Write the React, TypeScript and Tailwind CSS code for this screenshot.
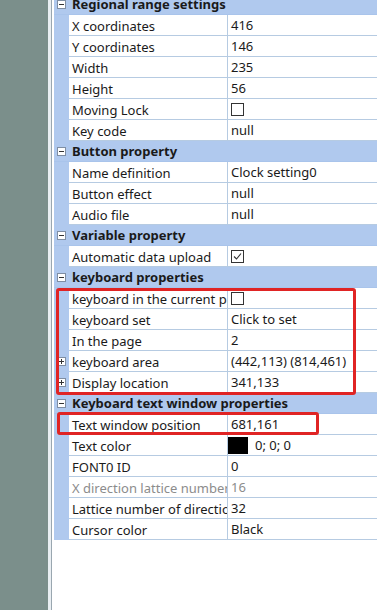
import type { ReactNode } from 'react';

type Row = { name: string; value?: ReactNode; plus?: boolean; dim?: boolean };
type Group = { title: string; rows: Row[] };

const Box = ({ checked }: { checked?: boolean }) => (
  <span className="inline-flex h-[13px] w-[13px] items-center justify-center border border-[#333] bg-white">
    {checked && (
      <svg width="11" height="11" viewBox="0 0 11 11">
        <path d="M2 5.5 L4.5 8 L9 2.5" fill="none" stroke="#333" strokeWidth="1.1" />
      </svg>
    )}
  </span>
);

const groups: Group[] = [
  {
    title: 'Regional range settings',
    rows: [
      { name: 'X coordinates', value: '416' },
      { name: 'Y coordinates', value: '146' },
      { name: 'Width', value: '235' },
      { name: 'Height', value: '56' },
      { name: 'Moving Lock', value: <Box /> },
      { name: 'Key code', value: 'null' },
    ],
  },
  {
    title: 'Button property',
    rows: [
      { name: 'Name definition', value: 'Clock setting0' },
      { name: 'Button effect', value: 'null' },
      { name: 'Audio file', value: 'null' },
    ],
  },
  {
    title: 'Variable property',
    rows: [{ name: 'Automatic data upload', value: <Box checked /> }],
  },
  {
    title: 'keyboard properties',
    rows: [
      { name: 'keyboard in the current page', value: <Box /> },
      { name: 'keyboard set', value: 'Click to set' },
      { name: 'In the page', value: '2' },
      { name: 'keyboard area', value: '(442,113) (814,461)', plus: true },
      { name: 'Display location', value: '341,133', plus: true },
    ],
  },
  {
    title: 'Keyboard text window properties',
    rows: [
      { name: 'Text window position', value: '681,161' },
      {
        name: 'Text color',
        value: (
          <span className="flex items-center gap-[7px] -ml-[3px]">
            <span className="h-[17px] w-[20px] bg-black" />
            0; 0; 0
          </span>
        ),
      },
      { name: 'FONT0 ID', value: '0' },
      { name: 'X direction lattice number', value: '16', dim: true },
      { name: 'Lattice number of direction Y', value: '32' },
      { name: 'Cursor color', value: 'Black' },
    ],
  },
];

const Toggle = ({ minus }: { minus?: boolean }) => (
  <span className="flex h-[9px] w-[9px] items-center justify-center border border-[#7f8ea3] bg-white">
    <span className="relative block h-px w-[5px] bg-[#333]">
      {!minus && <span className="absolute left-[2px] top-[-2px] block h-[5px] w-px bg-[#333]" />}
    </span>
  </span>
);

export default function App() {
  return (
    <div
      className="relative flex h-[610px] w-[377px] overflow-hidden bg-white text-[13px] text-[#1a1a1a]"
      style={{ fontFamily: '"Noto Sans", "Liberation Sans", sans-serif' }}
    >
      <div className="w-[48px] shrink-0 bg-[#7b8f8b]" />
      <div className="w-[3px] shrink-0 bg-[#e9eef2]" />
      <div className="w-px shrink-0 bg-[#9aa7b0]" />
      <div className="w-[2px] shrink-0 bg-white" />
      <div className="-mt-[6px] flex-1">
        {groups.map((g) => (
          <div key={g.title}>
            <div className="flex h-[21px] items-center border-b border-[#a9c4eb] bg-[#b0c9ee] pt-px">
              <span className="flex w-[15px] justify-center">
                <Toggle minus />
              </span>
              <span className="pl-[3px] font-bold whitespace-nowrap">{g.title}</span>
            </div>
            {g.rows.map((r) => (
              <div key={r.name} className="flex h-[21px] bg-[#b0c9ee]">
                <span className="flex w-[15px] shrink-0 items-center justify-center">
                  {r.plus && <Toggle />}
                </span>
                <div className="flex flex-1 border-b border-[#b6cbe2] bg-white">
                  <div
                    className={`w-[159px] shrink-0 overflow-hidden whitespace-nowrap border-r border-[#b6cbe2] pl-[3px] pt-px leading-[20px] ${
                      r.dim ? 'text-[#8c8c8c]' : ''
                    }`}
                  >
                    {r.name}
                  </div>
                  <div
                    className={`flex flex-1 items-center whitespace-nowrap pl-[3px] pt-px ${
                      r.dim ? 'text-[#8c8c8c]' : ''
                    }`}
                  >
                    {r.value}
                  </div>
                </div>
              </div>
            ))}
          </div>
        ))}
      </div>
      <div className="pointer-events-none absolute left-[56px] top-[288px] h-[107px] w-[300px] rounded-[3px] border-[3px] border-[#e02424]" />
      <div className="pointer-events-none absolute left-[57px] top-[412px] h-[23px] w-[262px] rounded-[3px] border-[3px] border-[#e02424]" />
    </div>
  );
}
